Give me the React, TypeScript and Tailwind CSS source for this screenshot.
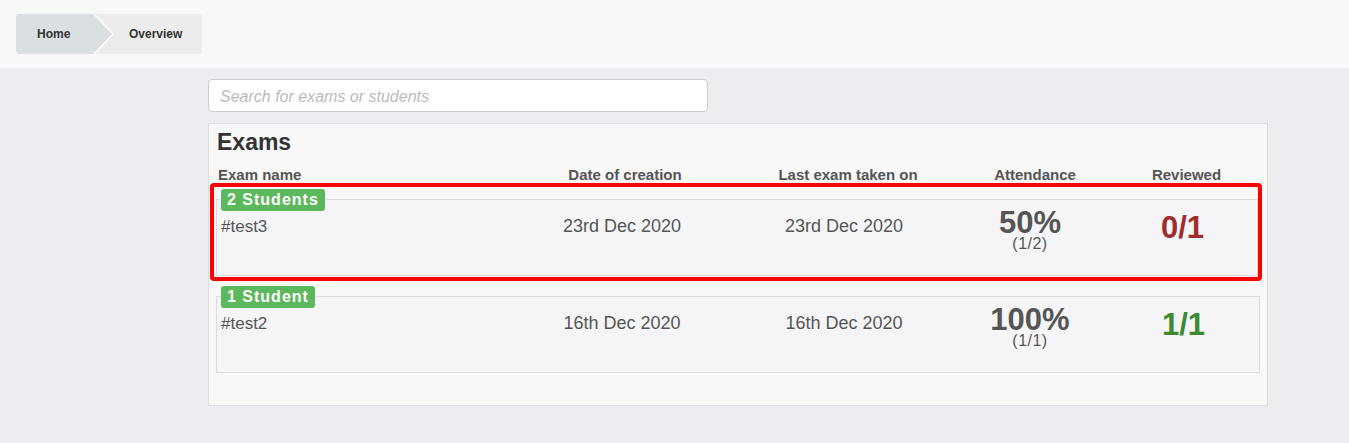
const font = { fontFamily: '"Liberation Sans", Arial, sans-serif' };

interface Exam {
  name: string;
  students: string;
  created: string;
  lastTaken: string;
  attendance: string;
  attendanceDetail: string;
  reviewed: string;
  reviewedDone: boolean;
  highlighted?: boolean;
}

const exams: Exam[] = [
  {
    name: '#test3',
    students: '2 Students',
    created: '23rd Dec 2020',
    lastTaken: '23rd Dec 2020',
    attendance: '50%',
    attendanceDetail: '(1/2)',
    reviewed: '0/1',
    reviewedDone: false,
    highlighted: true,
  },
  {
    name: '#test2',
    students: '1 Student',
    created: '16th Dec 2020',
    lastTaken: '16th Dec 2020',
    attendance: '100%',
    attendanceDetail: '(1/1)',
    reviewed: '1/1',
    reviewedDone: true,
  },
];

function Breadcrumb() {
  return (
    <div className="inline-flex h-10 rounded-[3px] bg-[#ececec] overflow-hidden text-[12px] font-bold text-[#333]">
      <div className="relative w-[98px] h-full bg-white [clip-path:polygon(0_0,79px_0,98px_50%,79px_100%,0_100%)]">
        <div className="h-full w-full bg-[#dadfe1] flex items-center pl-[21px] [clip-path:polygon(0_0,77px_0,96px_50%,77px_100%,0_100%)]">
          Home
        </div>
      </div>
      <div className="flex items-center pl-[15px] pr-5">Overview</div>
    </div>
  );
}

function ExamRow({ exam }: { exam: Exam }) {
  return (
    <div className={`relative pt-[10px] ${exam.highlighted ? 'mr-[2px]' : ''}`}>
      <div className="h-[77px] border border-[#dcdcdc] bg-[#f5f5f7] pl-[4px] grid grid-cols-[287px_228px_216px_156px_1fr] text-[#555]">
        <div className="pt-[17px] text-[17px] leading-[20px]">{exam.name}</div>
        <div className="pt-[16px] text-[18px] leading-[20px] text-center">{exam.created}</div>
        <div className="pt-[16px] text-[18px] leading-[20px] text-center">{exam.lastTaken}</div>
        <div className="pt-[9px] flex flex-col items-center">
          <span className="text-[31px] font-bold leading-[28px]">{exam.attendance}</span>
          <span className="text-[16px] leading-[14px] tracking-[0.5px]">{exam.attendanceDetail}</span>
        </div>
        <div
          className={`pt-[12px] text-center text-[31px] font-bold leading-none ${
            exam.reviewedDone ? 'text-[#3b8b2f]' : 'text-[#a02c2c]'
          }`}
        >
          {exam.reviewed}
        </div>
      </div>
      <span className="absolute left-[5px] top-0 h-[22px] px-[6px] rounded-[3px] bg-[#5cb85c] text-white text-[16px] font-bold leading-[22px] tracking-[1px]">
        {exam.students}
      </span>
      {exam.highlighted && (
        <div className="absolute -left-[6px] -top-[6px] -right-[4px] -bottom-[5px] border-4 border-[#ff0000] rounded-[4px] pointer-events-none" />
      )}
    </div>
  );
}

export default function App() {
  return (
    <div className="min-h-screen flex flex-col" style={font}>
      <header className="h-[68px] bg-[#f8f8f8] pt-[14px] pl-4">
        <Breadcrumb />
      </header>
      <main className="flex-1 bg-[#ecedf0] pt-[11px] pb-[37px]">
        <div className="ml-[208px] w-[1060px]">
          <input
            type="text"
            placeholder="Search for exams or students"
            className="block w-[500px] h-[33px] rounded-[4px] border border-[#cccccc] bg-white pl-[11px] pt-[3px] text-[16px] outline-none placeholder:italic placeholder:text-[#bbbbbb]"
          />
          <section className="mt-[11px] border border-[#dddddd] bg-[#f8f8f8] px-[7px] pt-[5px] pb-[32px]">
            <h2 className="pl-[1px] text-[23px] leading-[26px] font-bold text-[#333]">Exams</h2>
            <div className="mt-[11px] grid grid-cols-[295px_228px_218px_156px_1fr] text-[15px] leading-[17px] font-bold text-[#555]">
              <div className="pl-[2px]">Exam name</div>
              <div className="text-center">Date of creation</div>
              <div className="text-center">Last exam taken on</div>
              <div className="text-center">Attendance</div>
              <div className="text-center">Reviewed</div>
            </div>
            <div className="mt-[6px] flex flex-col gap-[10px]">
              {exams.map((exam) => (
                <ExamRow key={exam.name} exam={exam} />
              ))}
            </div>
          </section>
        </div>
      </main>
    </div>
  );
}
